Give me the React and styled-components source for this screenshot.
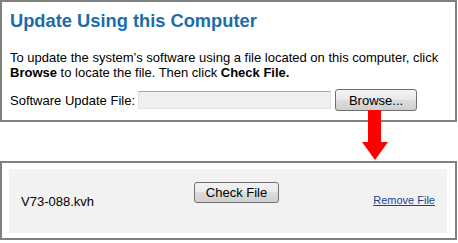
import React from "react";
import styled, { createGlobalStyle } from "styled-components";

const GlobalStyle = createGlobalStyle`
  html, body {
    margin: 0;
    padding: 0;
    background: #ffffff;
    font-family: "Liberation Sans", Arial, sans-serif;
    color: #000;
  }
`;

const Page = styled.div`
  position: relative;
  width: 458px;
  height: 243px;
  display: flex;
  flex-direction: column;
  gap: 39px;
`;

const Panel = styled.section`
  box-sizing: border-box;
  width: 457px;
  height: ${(p) => p.h}px;
  border: 2px solid #7f7f7f;
  padding: ${(p) => p.pad};
`;

const Title = styled.h1`
  margin: 0;
  font-size: 18.3px;
  line-height: 24px;
  font-weight: bold;
  color: #1b6ca8;
`;

const Text = styled.p`
  margin: 17px 0 0;
  font-size: 13px;
  line-height: 15px;
`;

const FileRow = styled.div`
  display: flex;
  align-items: center;
  margin-top: 9px;
  font-size: 13px;
`;

const Label = styled.span`
  margin-right: 3px;
`;

const FileInput = styled.div`
  box-sizing: border-box;
  width: 193px;
  height: 18px;
  background: #f0f0f0;
  border: 1px solid #e2e2e2;
  border-top-color: #a8a8a8;
  margin-right: 4px;
`;

const Button = styled.button`
  box-sizing: border-box;
  width: ${(p) => p.w}px;
  height: ${(p) => p.h}px;
  padding: 0;
  border: 1px solid #707070;
  border-radius: 3px;
  background: linear-gradient(#f2f2f2 0%, #ebebeb 45%, #dddddd 50%, #cfcfcf 100%);
  font-family: "Liberation Sans", Arial, sans-serif;
  font-size: 13px;
  color: #000;
`;

const Tray = styled.div`
  display: flex;
  align-items: flex-start;
  height: 64px;
  background: #f2f2f2;
  padding: 0 12px;
`;

const FileName = styled.span`
  width: 173px;
  margin-top: 25px;
  font-size: 13px;
  line-height: 15px;
`;

const CheckButton = styled(Button)`
  margin-top: 13px;
`;

const RemoveLink = styled.a`
  margin-left: auto;
  margin-top: 25px;
  font-size: 11px;
  line-height: 13px;
  color: #1c3f94;
  text-decoration: underline;
`;

const Arrow = styled.svg`
  position: absolute;
  left: 362px;
  top: 110px;
`;

export default function App() {
  return (
    <>
      <GlobalStyle />
      <Page>
        <Panel h={122} pad="7px 8px 6px">
          <Title>Update Using this Computer</Title>
          <Text>
            To update the system’s software using a file located on this computer, click{" "}
            <b>Browse</b> to locate the file. Then click <b>Check File.</b>
          </Text>
          <FileRow>
            <Label>Software Update File:</Label>
            <FileInput />
            <Button w={82} h={22}>Browse...</Button>
          </FileRow>
        </Panel>
        <Panel h={79} pad="6px 8px 5px 7px">
          <Tray>
            <FileName>V73-088.kvh</FileName>
            <CheckButton w={85} h={21}>Check File</CheckButton>
            <RemoveLink href="#">Remove File</RemoveLink>
          </Tray>
        </Panel>
        <Arrow width="26" height="51" viewBox="0 0 26 51">
          <rect x="6" y="0" width="13" height="33" fill="#ff0000" />
          <polygon points="0,32 26,32 13,50" fill="#ff0000" />
        </Arrow>
      </Page>
    </>
  );
}
